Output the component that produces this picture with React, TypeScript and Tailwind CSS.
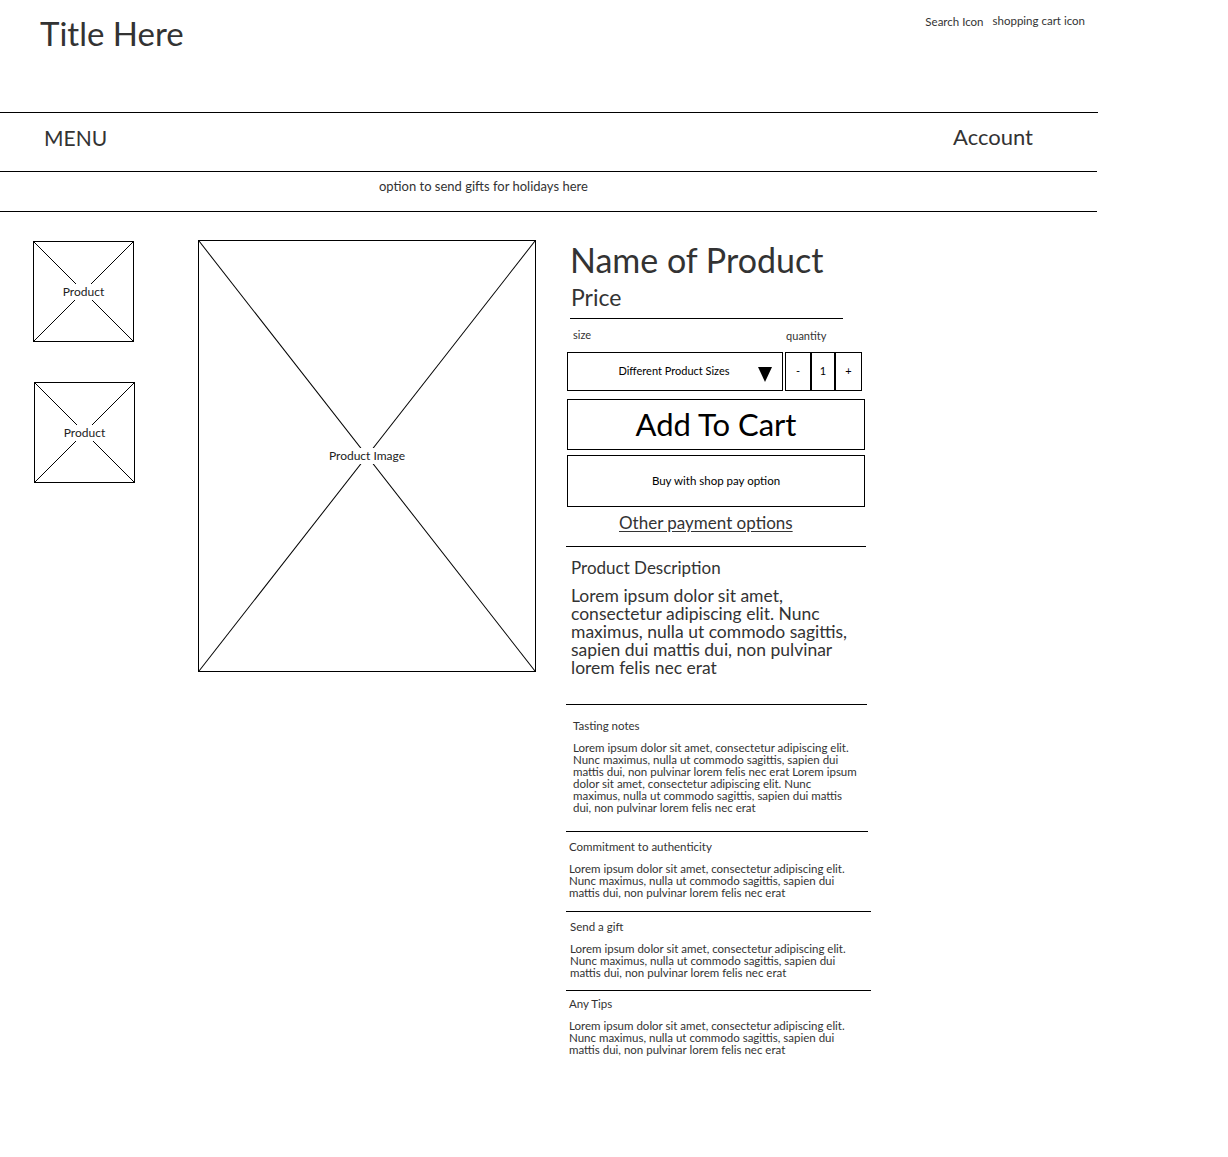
import type { ReactNode } from "react";

const FONT = { fontFamily: "Lato, 'Noto Sans', sans-serif" };

const LOREM_SHORT = [
  "Lorem ipsum dolor sit amet, consectetur adipiscing elit.",
  "Nunc maximus, nulla ut commodo sagittis, sapien dui",
  "mattis dui, non pulvinar lorem felis nec erat",
];

const LOREM_TASTING = [
  "Lorem ipsum dolor sit amet, consectetur adipiscing elit.",
  "Nunc maximus, nulla ut commodo sagittis, sapien dui",
  "mattis dui, non pulvinar lorem felis nec erat Lorem ipsum",
  "dolor sit amet, consectetur adipiscing elit. Nunc",
  "maximus, nulla ut commodo sagittis, sapien dui mattis",
  "dui, non pulvinar lorem felis nec erat",
];

const LOREM_BIG = [
  "Lorem ipsum dolor sit amet,",
  "consectetur adipiscing elit. Nunc",
  "maximus, nulla ut commodo sagittis,",
  "sapien dui mattis dui, non pulvinar",
  "lorem felis nec erat",
];

// wireframe placeholder: box with an X through it
function Placeholder({ label, className }: { label: string; className: string }) {
  return (
    <div className={`relative border border-black ${className}`}>
      <svg className="absolute inset-0 h-full w-full" preserveAspectRatio="none" viewBox="0 0 100 100">
        <line x1="0" y1="0" x2="100" y2="100" stroke="#000" strokeWidth="1" vectorEffect="non-scaling-stroke" />
        <line x1="100" y1="0" x2="0" y2="100" stroke="#000" strokeWidth="1" vectorEffect="non-scaling-stroke" />
      </svg>
      <div className="absolute inset-0 flex items-center justify-center">
        <span className="bg-white px-px py-[2px] text-[12px] leading-[12px] text-[#222]">{label}</span>
      </div>
    </div>
  );
}

function Lines({ lines, className }: { lines: string[]; className: string }) {
  return (
    <div className={`whitespace-nowrap ${className}`}>
      {lines.map((l) => (
        <div key={l}>{l}</div>
      ))}
    </div>
  );
}

function Rule({ className }: { className: string }) {
  return <div className={`border-t border-black ${className}`} />;
}

function InfoBlock({ title, lines, ml }: { title: string; lines: string[]; ml: string }): ReactNode {
  return (
    <>
      <div className={`mt-[9px] text-[11.5px] leading-[12px] ${ml}`}>{title}</div>
      <Lines lines={lines} className={`mt-[10px] text-[11.5px] leading-[12px] ${ml}`} />
    </>
  );
}

export default function App() {
  return (
    <div className="min-h-[1157px] w-[1228px] bg-white text-[#333]" style={FONT}>
      {/* header */}
      <div className="flex h-[112px] w-[1098px] items-start justify-between">
        <h1 className="ml-[40px] mt-[15px] text-[33px] leading-[36px] font-normal">Title Here</h1>
        <div className="mr-[13px] mt-[15px] flex items-start gap-[9px] text-[11.5px] leading-[12px]">
          <span className="mt-px">Search Icon</span>
          <span>shopping cart icon</span>
        </div>
      </div>

      {/* nav */}
      <div className="flex h-[59px] w-[1098px] items-start justify-between border-t border-black">
        <span className="ml-[44px] mt-[13px] text-[21px] leading-[24px]">MENU</span>
        <span className="mr-[65px] mt-[12px] text-[22px] leading-[24px]">Account</span>
      </div>
      <div className="flex h-[41px] w-[1097px] items-start border-y border-black">
        <span className="ml-[379px] mt-[7px] text-[13px] leading-[14px]">option to send gifts for holidays here</span>
      </div>

      {/* product */}
      <div className="flex items-start pt-[29px]">
        <div className="ml-[33px] flex w-[102px] flex-col">
          <Placeholder label="Product" className="h-[101px] w-[101px]" />
          <Placeholder label="Product" className="ml-px mt-[40px] h-[101px] w-[101px]" />
        </div>

        <Placeholder label="Product Image" className="-mt-px ml-[63px] h-[432px] w-[338px]" />

        <div className="-mt-px ml-[30px] flex w-[310px] flex-col">
          <div className="mt-[2px] ml-[4px] text-[34px] leading-[36px]">Name of Product</div>
          <div className="mt-[7px] ml-[5px] text-[23px] leading-[24px]">Price</div>
          <Rule className="mt-[9px] ml-[4px] w-[273px]" />

          <div className="mt-[10px] flex text-[11px] leading-[12px]">
            <span className="ml-[7px]">size</span>
            <span className="ml-[195px] mt-px">quantity</span>
          </div>

          <div className="mt-[10px] flex">
            <div className="relative ml-px flex h-[39px] w-[216px] items-center justify-center border border-black text-[11px] text-black">
              <span className="-ml-[2px]">Different Product Sizes</span>
              <svg className="absolute right-[10px] top-[14px]" width="14" height="15" viewBox="0 0 14 15">
                <polygon points="0,0 14,0 7,15" fill="#000" />
              </svg>
            </div>
            <div className="ml-[2px] flex h-[39px] text-[11px] text-black">
              <div className="flex w-[26px] items-center justify-center border border-black">-</div>
              <div className="flex w-[24px] items-center justify-center border border-black">1</div>
              <div className="flex w-[27px] items-center justify-center border border-black">+</div>
            </div>
          </div>

          <div className="mt-[8px] ml-px flex h-[51px] w-[298px] items-center justify-center border border-black text-[31px] text-black">
            Add To Cart
          </div>
          <div className="mt-[5px] ml-px flex h-[52px] w-[298px] items-center justify-center border border-black text-[11.5px] text-black">
            Buy with shop pay option
          </div>
          <div className="mt-[7px] ml-[53px] text-[17px] leading-[18px] underline underline-offset-2">
            Other payment options
          </div>
          <Rule className="mt-[14px] w-[300px]" />

          <div className="mt-[12px] ml-[5px] text-[17px] leading-[18px]">Product Description</div>
          <Lines lines={LOREM_BIG} className="mt-[10px] ml-[5px] text-[17.5px] leading-[18px]" />
          <Rule className="mt-[27px] w-[301px]" />

          <div className="mt-[15px] ml-[7px] text-[11.5px] leading-[12px]">Tasting notes</div>
          <Lines lines={LOREM_TASTING} className="mt-[10px] ml-[7px] text-[11.5px] leading-[12px]" />
          <Rule className="mt-[17px] w-[302px]" />

          <InfoBlock title="Commitment to authenticity" lines={LOREM_SHORT} ml="ml-[3px]" />
          <Rule className="mt-[12px] w-[305px]" />

          <InfoBlock title="Send a gift" lines={LOREM_SHORT} ml="ml-[4px]" />
          <Rule className="mt-[11px] w-[305px]" />

          <div className="mt-[7px] ml-[3px] text-[11.5px] leading-[12px]">Any Tips</div>
          <Lines lines={LOREM_SHORT} className="mt-[10px] ml-[3px] text-[11.5px] leading-[12px]" />
        </div>
      </div>
    </div>
  );
}
